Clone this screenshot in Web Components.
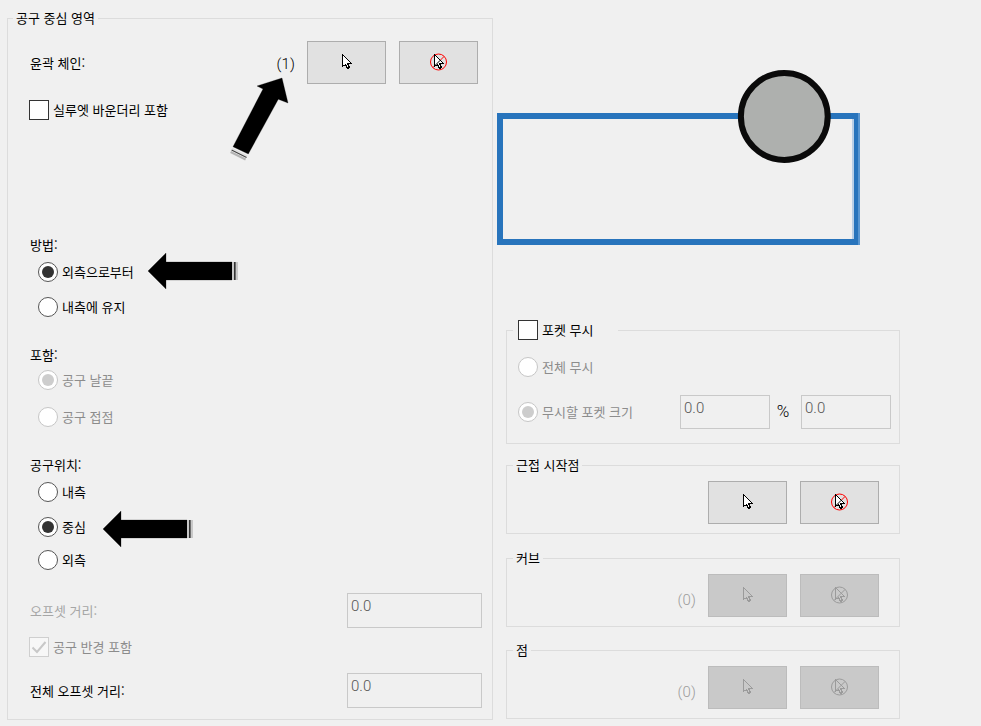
<!DOCTYPE html>
<html lang="ko">
<head>
<meta charset="utf-8">
<title>공구 중심 영역</title>
<style>
  html, body { margin: 0; background: #f0f0f0; }
  body { font: 13px/18px "Noto Sans CJK KR", "Noto Sans", sans-serif; color: #000; }
</style>
</head>
<body>
<x-page>
  <x-group slot="left" style="width:486px;height:702px;--pad-left:22px;--pad-right:10px;--legend-left:5px">
    <span slot="legend">공구 중심 영역</span>
    <x-row style="margin-top:14px;height:43px;margin-right:4px">
      <x-label style="flex:1">윤곽 체인:</x-label>
      <x-count style="margin:3px 12px 0 0">(1)</x-count>
      <x-pick></x-pick>
      <x-pick kind="clear" style="margin-left:13px"></x-pick>
    </x-row>
    <x-check style="margin:16px 0 0 -1px">실루엣 바운더리 포함</x-check>

    <x-label style="margin-top:116px">방법:</x-label>
    <x-radio checked style="margin:8px 0 0 8px">외측으로부터</x-radio>
    <x-radio style="margin:15px 0 0 8px">내측에 유지</x-radio>

    <x-label style="margin-top:29px">포함:</x-label>
    <x-radio checked disabled style="margin:6px 0 0 8px">공구 날끝</x-radio>
    <x-radio disabled style="margin:17px 0 0 8px">공구 접점</x-radio>

    <x-label style="margin-top:29px">공구위치:</x-label>
    <x-radio style="margin:8px 0 0 8px">내측</x-radio>
    <x-radio checked style="margin:15px 0 0 8px">중심</x-radio>
    <x-radio style="margin:13px 0 0 8px">외측</x-radio>

    <x-row style="margin-top:23px;height:35px">
      <x-label disabled style="flex:1;margin-top:1px">오프셋 거리:</x-label>
      <x-field style="width:135px;height:35px">0.0</x-field>
    </x-row>
    <x-check checked disabled style="margin:9px 0 0 -1px">공구 반경 포함</x-check>
    <x-row style="margin-top:16px;height:35px">
      <x-label style="flex:1;margin-top:1px">전체 오프셋 거리:</x-label>
      <x-field style="width:135px;height:35px">0.0</x-field>
    </x-row>
  </x-group>

  <x-diagram slot="right"></x-diagram>

  <x-group slot="right" style="width:394px;height:114px;margin:85px 0 0 9px;--pad-right:8px">
    <x-check slot="legend" style="margin:-1px 22px 0 2px">포켓 무시</x-check>
    <x-radio disabled style="margin:17px 0 0 11px">전체 무시</x-radio>
    <x-row style="margin-top:18px;height:34px">
      <x-radio checked disabled style="flex:1;margin-left:11px">무시할 포켓 크기</x-radio>
      <x-field style="width:90px;height:34px">0.0</x-field>
      <x-unit>%</x-unit>
      <x-field style="width:90px;height:34px">0.0</x-field>
    </x-row>
  </x-group>

  <x-group slot="right" style="width:394px;height:69px;margin:21px 0 0 9px;--pad-right:20px">
    <span slot="legend">근접 시작점</span>
    <x-row style="margin-top:7px;height:43px;justify-content:flex-end">
      <x-pick></x-pick>
      <x-pick kind="clear" style="margin-left:13px"></x-pick>
    </x-row>
  </x-group>

  <x-group slot="right" style="width:394px;height:69px;margin:24px 0 0 9px;--pad-right:20px">
    <span slot="legend">커브</span>
    <x-row style="margin-top:7px;height:43px;justify-content:flex-end">
      <x-count disabled style="margin:9px 12px 0 0">(0)</x-count>
      <x-pick disabled></x-pick>
      <x-pick disabled kind="clear" style="margin-left:13px"></x-pick>
    </x-row>
  </x-group>

  <x-group slot="right" style="width:394px;height:69px;margin:23px 0 0 9px;--pad-right:20px">
    <span slot="legend">점</span>
    <x-row style="margin-top:7px;height:43px;justify-content:flex-end">
      <x-count disabled style="margin:9px 12px 0 0">(0)</x-count>
      <x-pick disabled></x-pick>
      <x-pick disabled kind="clear" style="margin-left:13px"></x-pick>
    </x-row>
  </x-group>

  <x-arrow slot="overlay" kind="up" style="left:225px;top:75px"></x-arrow>
  <x-arrow slot="overlay" kind="left" style="left:146px;top:251px"></x-arrow>
  <x-arrow slot="overlay" kind="left" style="left:101px;top:509px"></x-arrow>
</x-page>

<script>
const define = (name, css, html) => {
  customElements.define(name, class extends HTMLElement {
    constructor() {
      super();
      this.attachShadow({ mode: 'open' });
    }
    connectedCallback() {
      const body = typeof html === 'function' ? html(this) : html;
      this.shadowRoot.innerHTML = `<style>${css}</style>${body}`;
    }
  });
};

define('x-page', `
  :host { display: flex; position: relative; width: 981px; height: 726px; overflow: hidden;
          box-sizing: border-box; padding: 18px 0 0 7px; background: #f0f0f0; }
  .right { display: flex; flex-direction: column; margin: 51px 0 0 4px; }
`, `<slot name="left"></slot><div class="right"><slot name="right"></slot></div><slot name="overlay"></slot>`);

define('x-group', `
  :host { display: flex; flex-direction: column; box-sizing: border-box; border: 1px solid #dcdcdc;
          padding: 0 var(--pad-right, 0) 0 var(--pad-left, 0); }
  .legend { display: flex; align-items: center; width: fit-content; min-height: 18px;
            margin: -10px 0 0 calc(var(--legend-left, 6px) - var(--pad-left, 0px)); padding: 0 3px; background: #f0f0f0; }
`, `<div class="legend"><slot name="legend"></slot></div><slot></slot>`);

define('x-row', `:host { display: flex; align-items: center; }`, `<slot></slot>`);

define('x-label', `
  :host { display: block; line-height: 18px; }
  :host([disabled]) { color: #a6a6a6; }
`, `<slot></slot>`);

define('x-count', `
  :host { display: block; font: 300 15px/20px Roboto, sans-serif; letter-spacing: .2px; }
  :host([disabled]) { color: #9c9c9c; }
`, `<slot></slot>`);

define('x-unit', `
  :host { display: block; width: 14px; margin: -2px 11px 0 6px; font: 300 17px/20px Roboto, sans-serif; text-align: center; }
`, `<slot></slot>`);

define('x-field', `
  :host { display: block; box-sizing: border-box; border: 1px solid #c9c9c9; padding: 2px 0 0 3px;
          font: 300 15px/20px Roboto, sans-serif; color: #555; background: #f0f0f0; }
`, `<slot></slot>`);

define('x-radio', `
  :host { display: flex; align-items: center; gap: 4px; height: 20px; }
  .c { box-sizing: border-box; width: 20px; height: 20px; flex: none; border-radius: 50%;
       background: #fff; border: 1px solid #555; display: grid; place-items: center; }
  .d { width: 12px; height: 12px; border-radius: 50%; background: #333; display: none; }
  :host([checked]) .d { display: block; }
  :host([disabled]) { color: #8c8c8c; }
  :host([disabled]) .c { border-color: #c6c6c6; }
  :host([disabled]) .d { background: #cdcdcd; }
`, `<span class="c"><span class="d"></span></span><span><slot></slot></span>`);

define('x-check', `
  :host { display: flex; align-items: center; gap: 4px; height: 20px; }
  .b { box-sizing: border-box; width: 20px; height: 20px; flex: none; background: #fff;
       border: 1px solid #333; display: block; }
  svg { display: block; }
  :host([disabled]) { color: #8c8c8c; }
  :host([disabled]) .b { border-color: #cfcfcf; background: #f7f7f7; }
`, el => `<span class="b">${el.hasAttribute('checked')
    ? '<svg width="18" height="18" viewBox="0 0 18 18"><path d="M2.5 9.5 L7 14 L15.5 4" fill="none" stroke="#c8c8c8" stroke-width="2"/></svg>'
    : ''}</span><span><slot></slot></span>`);

define('x-pick', `
  :host { display: flex; align-items: center; justify-content: center; box-sizing: border-box;
          width: 79px; height: 43px; flex: none; border: 1px solid #adadad; background: #e1e1e1; padding-bottom: 1px; }
  :host([disabled]) { border-color: #bcbcbc; background: #c9c9c9; }
  svg { display: block; }
`, el => {
  const off = el.hasAttribute('disabled');
  const line = off ? '#9b9b9b' : '#000';
  const fill = off ? '#c9c9c9' : '#fff';
  const red = off ? '#9b9b9b' : '#f00';
  const clear = el.getAttribute('kind') === 'clear';
  return `<svg width="17" height="18" viewBox="0 0 17 18" aria-hidden="true">
    ${clear ? `<circle cx="8.5" cy="9" r="8" fill="none" stroke="${red}" stroke-width="1"/>
      <path d="M3 14.5 L14 3.5" stroke="${red}" stroke-width="1"/>` : ''}
    <path transform="translate(4 1)" shape-rendering="crispEdges"
      d="M.5 .5 V12.5 L3.5 10.5 L5.5 14.5 L7.5 13.5 L5.5 9.5 H9.5 Z"
      fill="${fill}" stroke="${line}"/>
    ${clear ? `<path d="M4.5 13 L10.3 7.2" stroke="${line}" stroke-width="1"/>` : ''}
  </svg>`;
});

define('x-diagram', `
  :host { display: block; width: 363px; height: 176px; }
  svg { display: block; }
`, `<svg width="363" height="176" viewBox="0 0 363 176" aria-hidden="true">
    <path d="M0 44 H358 V50 H6 V170 H358 V176 H0 Z" fill="#2874bc"/>
    <rect x="355" y="50" width="2" height="120" fill="#b9cfe6"/>
    <rect x="357" y="44" width="4" height="132" fill="#2874bc"/>
    <rect x="361" y="44" width="2" height="132" fill="#5a96d0"/>
    <circle cx="287.3" cy="47.5" r="43.4" fill="#aeb0ae" stroke="#0a0a0a" stroke-width="6"/>
  </svg>`);

define('x-arrow', `
  :host { display: block; position: absolute; pointer-events: none; }
  svg { display: block; overflow: visible; }
`, el => el.getAttribute('kind') === 'up'
  ? `<svg width="70" height="90" viewBox="0 0 70 90" aria-hidden="true">
      <path d="M57 3 L63 28 L53.3 24.3 L23.3 79 L8 71.7 L38 14 L32 11 Z" fill="#000" stroke="rgba(0,0,0,.25)" stroke-width="1"/>
      <path d="M7.3 73.5 L22.3 81" stroke="#ddd" stroke-width="1.2"/>
      <path d="M6.6 75 L21.6 82.5" stroke="#444" stroke-width="1.2"/>
      <path d="M5.6 77 L20.6 84.5" stroke="#b5b5b5" stroke-width="2"/>
    </svg>`
  : `<svg width="92" height="40" viewBox="0 0 92 40" aria-hidden="true">
      <path d="M2 20 L20 2 V11 H86 V29 H20 V38 Z" fill="#000" stroke="rgba(0,0,0,.25)" stroke-width="1"/>
      <rect x="86" y="11" width="6" height="18" fill="#c8c8c8"/>
      <rect x="88" y="11" width="1.6" height="18" fill="#333"/>
    </svg>`);
</script>
</body>
</html>
